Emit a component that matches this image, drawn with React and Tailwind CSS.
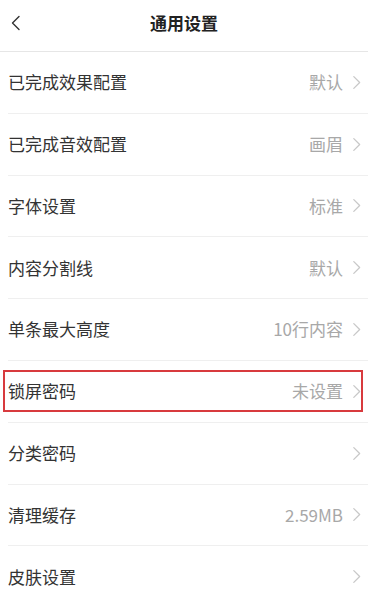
const rows = [
  { label: '已完成效果配置', value: '默认' },
  { label: '已完成音效配置', value: '画眉' },
  { label: '字体设置', value: '标准' },
  { label: '内容分割线', value: '默认' },
  { label: '单条最大高度', value: '10行内容' },
  { label: '锁屏密码', value: '未设置', marked: true },
  { label: '分类密码', value: '' },
  { label: '清理缓存', value: '2.59MB' },
  { label: '皮肤设置', value: '' },
];

function Chevron({ className, dir = 'right' }) {
  return (
    <svg viewBox="0 0 10 16" className={className} fill="none" stroke="currentColor" strokeWidth="1.4" strokeLinecap="round" strokeLinejoin="round">
      {dir === 'right' ? <path d="M2 1.5 8.5 8 2 14.5" /> : <path d="M8 1.5 1.5 8 8 14.5" />}
    </svg>
  );
}

export default function App() {
  return (
    <div
      className="w-[368px] h-[602px] overflow-hidden bg-white"
      style={{ fontFamily: '"Noto Sans CJK SC", "Noto Sans", sans-serif' }}
    >
      {/* Header */}
      <div className="relative h-[52px] flex items-center justify-center border-b border-[#e6e6e6]">
        <Chevron dir="left" className="absolute left-[11px] top-[15px] w-[10px] h-[16px] text-[#333]" />
        <h1 className="text-[17px] font-bold text-[#222] leading-none -mt-[6px]">通用设置</h1>
      </div>

      {/* Rows */}
      <div>
        {rows.map((row) => (
          <div key={row.label} className="relative h-[61.8px] pl-2">
            <div className="h-full flex items-center justify-between border-b border-[#efefef] pr-[7px]">
              <span className="text-[17px] text-[#333] -mt-[1px]">{row.label}</span>
              <div className="flex items-center gap-[9px]">
                {row.value && <span className="text-[17px] text-[#a8a8a8] -mt-[1px]">{row.value}</span>}
                <Chevron className="w-[9px] h-[15px] text-[#c8c8c8]" />
              </div>
            </div>
            {row.marked && (
              <div className="absolute left-[3px] right-[5px] top-[9px] bottom-[11px] border-2 border-[#d83a3e] pointer-events-none" />
            )}
          </div>
        ))}
      </div>
    </div>
  );
}
